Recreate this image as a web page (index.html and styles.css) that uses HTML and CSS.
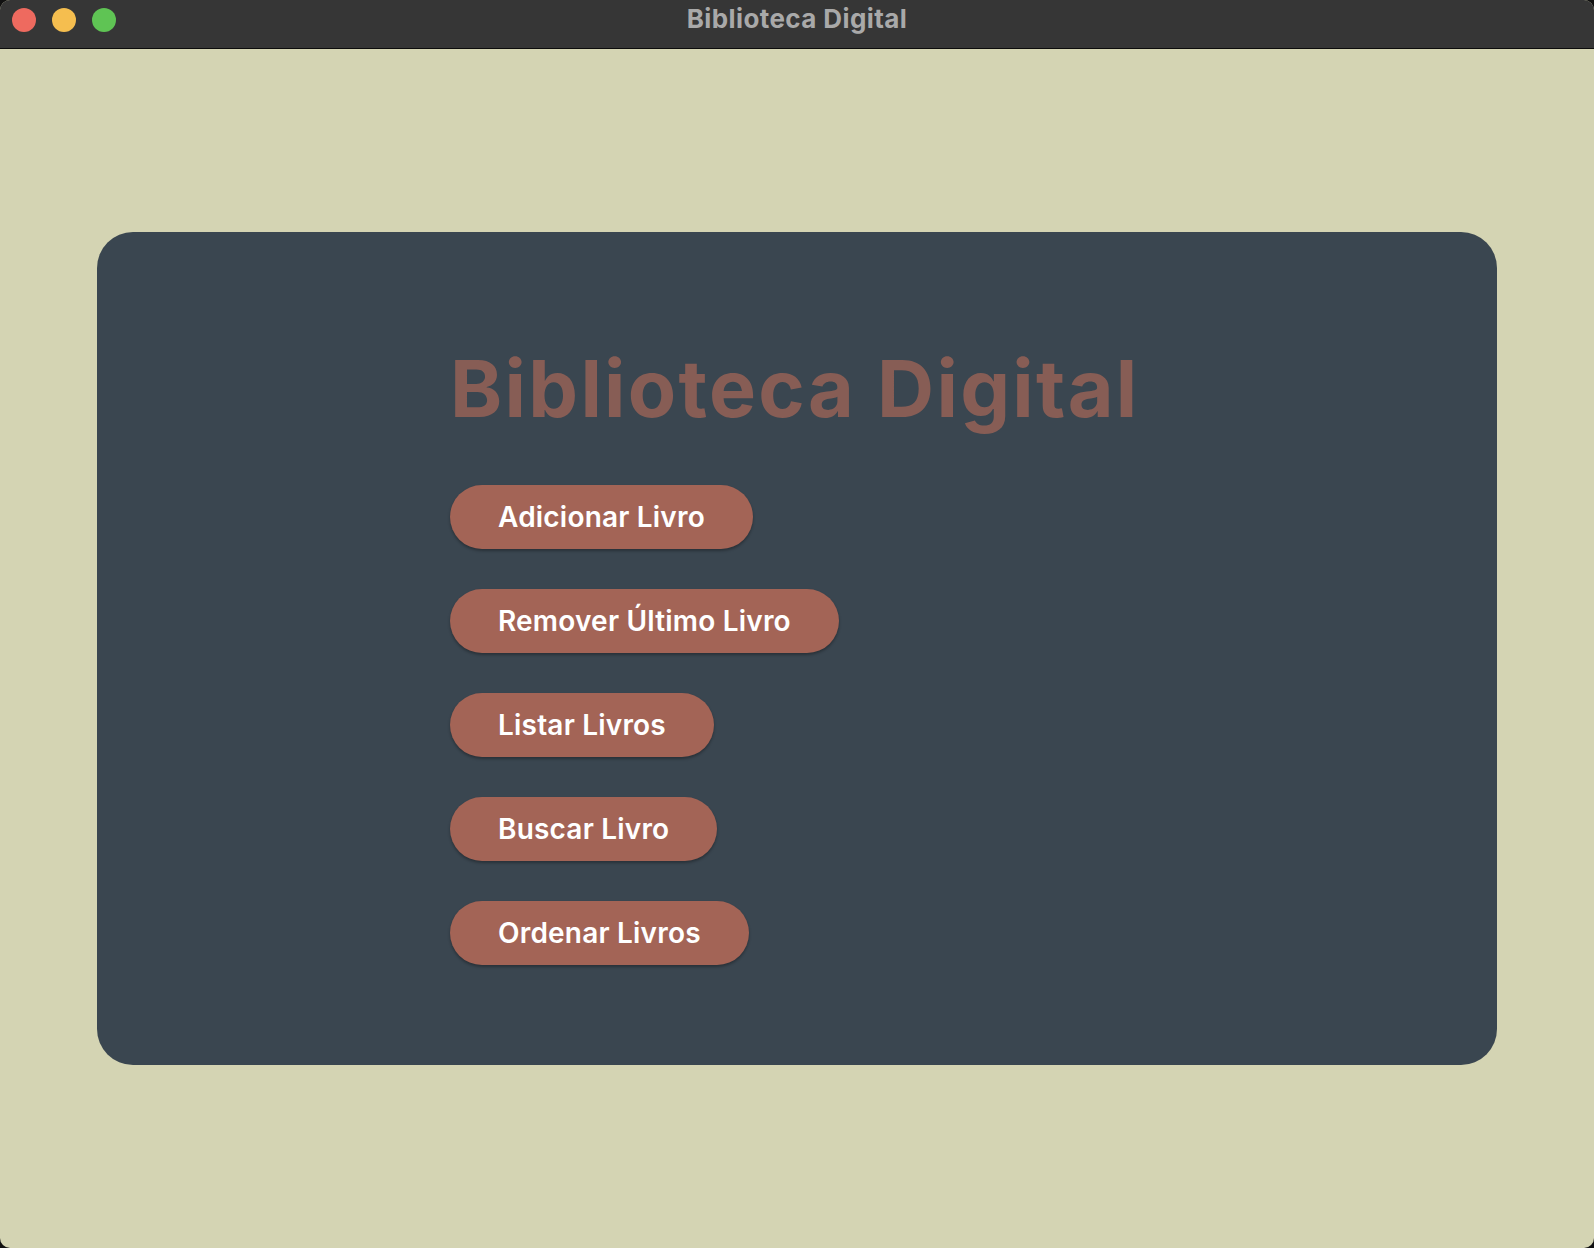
FILE: index.html
```html
<!DOCTYPE html>
<html lang="pt">
<head>
<meta charset="utf-8">
<title>Biblioteca Digital</title>
<link rel="stylesheet" href="styles.css">
</head>
<body>
<div class="window">
  <header class="titlebar">
    <div class="lights">
      <span class="light red"></span>
      <span class="light yellow"></span>
      <span class="light green"></span>
    </div>
    <div class="title">Biblioteca Digital</div>
  </header>
  <main class="content">
    <section class="card">
      <div class="menu">
        <h1 class="heading">Biblioteca Digital</h1>
        <button class="btn">Adicionar Livro</button>
        <button class="btn">Remover Último Livro</button>
        <button class="btn">Listar Livros</button>
        <button class="btn">Buscar Livro</button>
        <button class="btn">Ordenar Livros</button>
      </div>
    </section>
  </main>
</div>
</body>
</html>
```

FILE: styles.css
```css
html, body {
  margin: 0;
  padding: 0;
  width: 1594px;
  height: 1248px;
  background: #111111;
  overflow: hidden;
}

.window {
  width: 1594px;
  height: 1248px;
  display: flex;
  flex-direction: column;
  border-radius: 10px;
  overflow: hidden;
  background: #d4d4b3;
  font-family: Inter, "Noto Sans", sans-serif;
}

.titlebar {
  position: relative;
  height: 48px;
  flex: 0 0 48px;
  background: #363636;
  border-bottom: 1px solid #0c0c0c;
  display: flex;
  align-items: flex-start;
}

.lights {
  display: flex;
  gap: 16px;
  padding: 8px 0 0 12px;
}

.light {
  width: 24px;
  height: 24px;
  border-radius: 50%;
  display: block;
}
.red { background: #ee6a5f; }
.yellow { background: #f5be4f; }
.green { background: #5fc454; }

.title {
  position: absolute;
  left: 0;
  right: 0;
  top: 0;
  height: 48px;
  line-height: 38px;
  text-align: center;
  color: #a9a9a9;
  font-weight: 700;
  font-size: 26px;
  letter-spacing: 0.4px;
}

.content {
  flex: 1;
  display: flex;
  align-items: center;
  justify-content: center;
}

.card {
  width: 1400px;
  height: 833px;
  box-sizing: border-box;
  background: #3a4650;
  border-radius: 36px;
  padding: 108px 0 0 353px;
}

.menu {
  display: flex;
  flex-direction: column;
  align-items: flex-start;
  gap: 40px;
}

.heading {
  margin: 0 0 9px 0;
  color: #875d55;
  font-size: 79px;
  font-weight: 700;
  line-height: 96px;
  letter-spacing: 2.3px;
}

.btn {
  height: 64px;
  border: none;
  border-radius: 32px;
  background: #a36456;
  color: #ffffff;
  font-family: Inter, "Noto Sans", sans-serif;
  font-weight: 600;
  font-size: 28px;
  letter-spacing: 0.2px;
  padding: 0 48px;
  box-shadow: 0 2px 3px rgba(0, 0, 0, 0.3);
  cursor: pointer;
}
```
